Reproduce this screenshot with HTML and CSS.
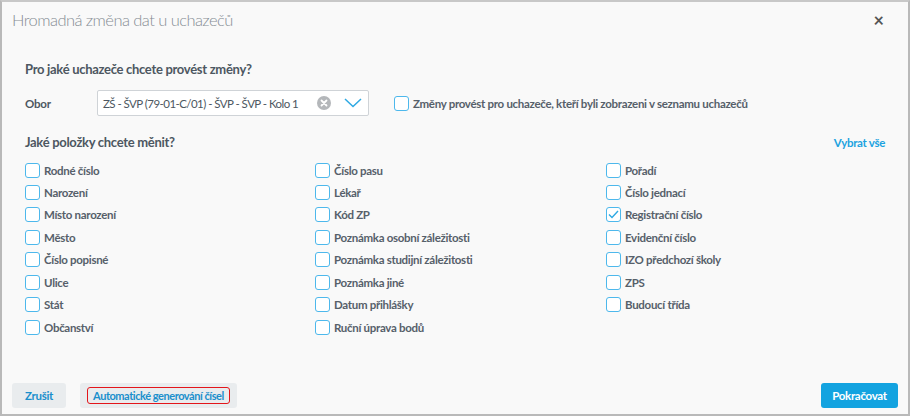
FILE: index.html
```html
<!DOCTYPE html>
<html lang="cs">
<head>
<meta charset="utf-8">
<link rel="stylesheet" href="styles.css">
</head>
<body>
<div class="dialog">
  <div class="header">
    <div class="title">Hromadná změna dat u uchazečů</div>
    <div class="close">×</div>
  </div>
  <div class="content">
    <div class="section-title">Pro jaké uchazeče chcete provést změny?</div>
    <div class="obor-row">
      <div class="obor-label">Obor</div>
      <div class="select">
        <span class="select-text">ZŠ - ŠVP (79-01-C/01) - ŠVP - ŠVP - Kolo 1</span>
        <svg class="clear" width="14" height="14" viewBox="0 0 14 14"><circle cx="7" cy="7" r="7" fill="#b4b7ba"/><path d="M4.5 4.5 L9.5 9.5 M9.5 4.5 L4.5 9.5" stroke="#fff" stroke-width="1.8" stroke-linecap="round"/></svg>
        <svg class="chevron" width="18" height="10" viewBox="0 0 18 10"><path d="M1 1 L9 8.5 L17 1" fill="none" stroke="#2ea9e3" stroke-width="1.5"/></svg>
      </div>
      <label class="check wide"><span class="box"></span><span>Změny provést pro uchazeče, kteří byli zobrazeni v seznamu uchazečů</span></label>
    </div>
    <div class="items-head">
      <div class="section-title">Jaké položky chcete měnit?</div>
      <a class="select-all">Vybrat vše</a>
    </div>
    <div class="grid">
      <div class="col">
        <label class="check"><span class="box"></span><span>Rodné číslo</span></label>
        <label class="check"><span class="box"></span><span>Narození</span></label>
        <label class="check"><span class="box"></span><span>Místo narození</span></label>
        <label class="check"><span class="box"></span><span>Město</span></label>
        <label class="check"><span class="box"></span><span>Číslo popisné</span></label>
        <label class="check"><span class="box"></span><span>Ulice</span></label>
        <label class="check"><span class="box"></span><span>Stát</span></label>
        <label class="check"><span class="box"></span><span>Občanství</span></label>
      </div>
      <div class="col">
        <label class="check"><span class="box"></span><span>Číslo pasu</span></label>
        <label class="check"><span class="box"></span><span>Lékař</span></label>
        <label class="check"><span class="box"></span><span>Kód ZP</span></label>
        <label class="check"><span class="box"></span><span>Poznámka osobní záležitosti</span></label>
        <label class="check"><span class="box"></span><span>Poznámka studijní záležitosti</span></label>
        <label class="check"><span class="box"></span><span>Poznámka jiné</span></label>
        <label class="check"><span class="box"></span><span>Datum přihlášky</span></label>
        <label class="check"><span class="box"></span><span>Ruční úprava bodů</span></label>
      </div>
      <div class="col">
        <label class="check"><span class="box"></span><span>Pořadí</span></label>
        <label class="check"><span class="box"></span><span>Číslo jednací</span></label>
        <label class="check"><span class="box checked"><svg width="11" height="9" viewBox="0 0 11 9"><path d="M1 4.5 L4 7.5 L10 1" fill="none" stroke="#2ea9e3" stroke-width="1.4"/></svg></span><span>Registrační číslo</span></label>
        <label class="check"><span class="box"></span><span>Evidenční číslo</span></label>
        <label class="check"><span class="box"></span><span>IZO předchozí školy</span></label>
        <label class="check"><span class="box"></span><span>ZPS</span></label>
        <label class="check"><span class="box"></span><span>Budoucí třída</span></label>
      </div>
    </div>
  </div>
  <div class="footer">
    <div class="left-buttons">
      <button class="btn btn-light">Zrušit</button>
      <button class="btn btn-light btn-auto"><span class="outlined">Automatické generování čísel</span></button>
    </div>
    <button class="btn btn-primary">Pokračovat</button>
  </div>
</div>
</body>
</html>
```

FILE: styles.css
```css
html, body {
  margin: 0;
  padding: 0;
}
body {
  width: 910px;
  height: 416px;
  font-family: "Source Sans Pro", Lato, "Open Sans", sans-serif;
  background: #f9f9f9;
}
.dialog {
  box-sizing: border-box;
  width: 910px;
  height: 416px;
  border: 2px solid #b9b9b9;
  border-top-color: #c8c8c8;
  background: #f9f9f9;
  display: flex;
  flex-direction: column;
  color: #555f69;
}
.header {
  height: 36px;
  display: flex;
  align-items: center;
  justify-content: space-between;
  padding: 0 24px 0 10px;
}
.title {
  font-size: 16.5px;
  font-weight: 300;
  color: #868d94;
  letter-spacing: -0.55px;
}
.close {
  font-size: 18px;
  font-weight: 700;
  color: #555;
  line-height: 1;
}
.content {
  flex: 1;
  padding: 22px 23px 0 23px;
}
.section-title {
  font-size: 13px;
  font-weight: 700;
  color: #4d5761;
  line-height: 18px;
  letter-spacing: -0.3px;
}
.obor-row {
  display: flex;
  align-items: center;
  margin-top: 12px;
  height: 26px;
}
.obor-label {
  width: 72px;
  font-size: 11.5px;
  font-weight: 700;
  color: #4d5761;
  letter-spacing: -0.2px;
}
.select {
  box-sizing: border-box;
  width: 272px;
  height: 26px;
  border: 1px solid #cfd3d7;
  border-radius: 2px;
  background: #fff;
  display: flex;
  align-items: center;
  padding: 0 6px 0 5px;
}
.select-text {
  flex: 1;
  font-size: 11.5px;
  color: #4d5761;
  white-space: nowrap;
  letter-spacing: -0.55px;
}
.clear {
  margin-right: 13px;
}
.check {
  display: flex;
  align-items: center;
  gap: 4px;
  height: 15px;
  font-size: 11.5px;
  font-weight: 700;
  color: #56606a;
  white-space: nowrap;
  letter-spacing: -0.3px;
}
.check.wide {
  margin-left: 25px;
}
.box {
  box-sizing: border-box;
  width: 15px;
  height: 15px;
  flex: none;
  border: 1.5px solid #4db8ec;
  border-radius: 3px;
  background: #fff;
  display: flex;
  align-items: center;
  justify-content: center;
}
.items-head {
  display: flex;
  justify-content: space-between;
  align-items: center;
  margin-top: 17px;
}
.select-all {
  font-size: 11.5px;
  font-weight: 700;
  color: #1ca3e0;
  letter-spacing: -0.3px;
}
.grid {
  display: grid;
  grid-template-columns: 290px 291px 1fr;
  margin-top: 11.5px;
}
.col {
  display: flex;
  flex-direction: column;
  gap: 7.45px;
}
.footer {
  display: flex;
  justify-content: space-between;
  align-items: center;
  padding: 0 10px 6px 10px;
  height: 25px;
}
.left-buttons {
  display: flex;
  gap: 14px;
}
.btn {
  font-family: inherit;
  height: 25px;
  border: none;
  border-radius: 3px;
  font-size: 11.5px;
  font-weight: 700;
  letter-spacing: -0.3px;
  padding: 0 13px;
  cursor: pointer;
}
.btn-light {
  background: #e9ecee;
  color: #1a8fcc;
}
.btn-auto {
  padding: 0 7px;
  font-size: 11px;
  letter-spacing: -0.45px;
}
.outlined {
  display: inline-block;
  border: 1.5px solid #e3161b;
  border-radius: 3px;
  padding: 1px 5px 1px 5px;
}
.btn-primary {
  background: #13a3e0;
  color: #fff;
  width: 77px;
  padding: 0;
}
```
